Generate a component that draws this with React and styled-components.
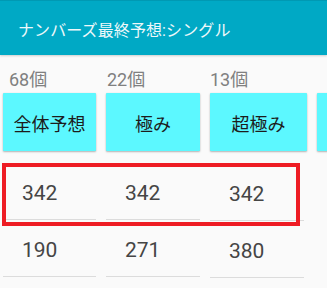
import React from "react";
import styled, { createGlobalStyle } from "styled-components";

const Global = createGlobalStyle`
  html, body { margin: 0; padding: 0; }
  body {
    background: #fafafa;
    font-family: Roboto, "Noto Sans CJK JP", sans-serif;
    overflow: hidden;
  }
`;

const Page = styled.div`
  width: 327px;
  height: 288px;
  overflow: hidden;
`;

const Header = styled.header`
  height: 55px;
  background: #00a9c5;
  border-top: 1px solid #0099b3;
  box-shadow: 0 1px 2px rgba(0, 0, 0, 0.18);
  display: flex;
  align-items: center;
  padding-left: 18px;
  padding-top: 2px;
  box-sizing: border-box;
`;

const Title = styled.h1`
  margin: 0;
  font-size: 16px;
  font-weight: 400;
  color: #eef8fa;
  letter-spacing: 0.1px;
`;

const Board = styled.div`
  position: relative;
  display: flex;
  gap: 10px;
  padding: 13px 0 0 3px;
`;

const Column = styled.div`
  flex: 0 0 ${(p) => p.$w}px;
  width: ${(p) => p.$w}px;
  display: flex;
  flex-direction: column;
`;

const Count = styled.div`
  height: 24px;
  line-height: 24px;
  padding-left: ${(p) => p.$pad}px;
  font-size: 18px;
  color: #808080;
  white-space: nowrap;
`;

const Pick = styled.button`
  margin-top: 1px;
  height: 58px;
  width: 100%;
  border: none;
  border-radius: 1px;
  background: #5cf8ff;
  box-shadow: 0 1px 2px rgba(0, 0, 0, 0.28), 0 0 1px rgba(0, 0, 0, 0.12);
  font-family: Roboto, "Noto Sans CJK JP", sans-serif;
  font-size: 18px;
  color: #1c1c1c;
  padding: 0;
  padding-top: 2px;
  white-space: nowrap;
`;

const Rows = styled.div`
  margin-top: ${(p) => 12 + p.$shift}px;
  width: ${(p) => p.$w}px;
`;

const Cell = styled.div`
  height: 57px;
  display: flex;
  align-items: center;
  padding: 3px 0 0 19px;
  box-sizing: border-box;
  border-bottom: 1px solid #dcdcdc;
  font-size: 21px;
  color: #454545;
`;

const Highlight = styled.div`
  position: absolute;
  left: 2px;
  top: 108px;
  width: 298px;
  height: 63px;
  border: 4px solid #ee1c24;
  box-sizing: border-box;
  pointer-events: none;
`;

const columns = [
  { w: 93, pad: 6, count: "68個", label: "全体予想", nums: ["342", "190"], line: 93, shift: 0 },
  { w: 94, pad: 1, count: "22個", label: "極み", nums: ["342", "271"], line: 94, shift: 0 },
  { w: 97, pad: 0, count: "13個", label: "超極み", nums: ["342", "380"], line: 94, shift: 1 },
  { w: 97, pad: 0, count: "", label: "", nums: [], line: 0, shift: 0 },
];

export default function App() {
  return (
    <Page>
      <Global />
      <Header>
        <Title>ナンバーズ最終予想:シングル</Title>
      </Header>
      <Board>
        {columns.map((c, i) => (
          <Column key={i} $w={c.w}>
            <Count $pad={c.pad}>{c.count}</Count>
            <Pick>{c.label}</Pick>
            <Rows $w={c.line} $shift={c.shift}>
              {c.nums.map((n, j) => (
                <Cell key={j}>{n}</Cell>
              ))}
            </Rows>
          </Column>
        ))}
        <Highlight />
      </Board>
    </Page>
  );
}
